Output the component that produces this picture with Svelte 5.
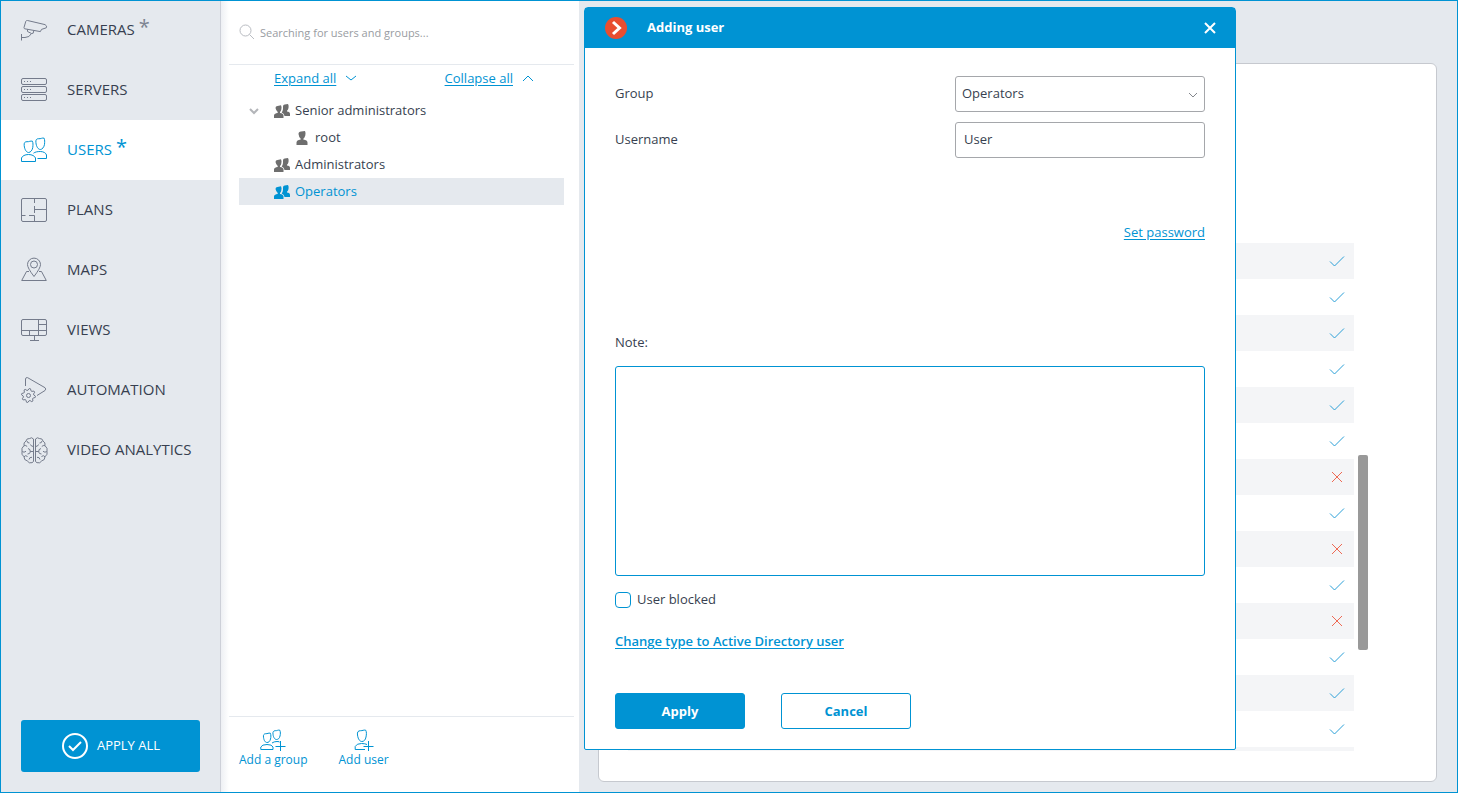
<script lang="ts">
  const menu = [
    { id: "cameras", title: "CAMERAS", changed: true },
    { id: "servers", title: "SERVERS" },
    { id: "users", title: "USERS", changed: true },
    { id: "plans", title: "PLANS" },
    { id: "maps", title: "MAPS" },
    { id: "views", title: "VIEWS" },
    { id: "automation", title: "AUTOMATION" },
    { id: "analytics", title: "VIDEO ANALYTICS" },
  ];

  const tree = [
    { name: "Senior administrators", level: 0, open: true },
    { name: "root", level: 1 },
    { name: "Administrators", level: 0 },
    { name: "Operators", level: 0 },
  ];

  // permissions of the selected group
  const rights = [
    true, true, true, true, true, true, false, true,
    false, true, false, true, true, true, true,
  ];

  // outline of a cog with eight teeth
  function cog(cx: number, cy: number, inner: number, outer: number) {
    const points = [];
    for (let i = 0; i < 32; i++) {
      const r = i % 4 < 2 ? outer : inner;
      const a = ((i + 0.5) / 32) * Math.PI * 2;
      points.push(`${(cx + r * Math.cos(a)).toFixed(2)},${(cy + r * Math.sin(a)).toFixed(2)}`);
    }
    return points.join(" ");
  }

  let section = $state("users");
  let selected = $state("Operators");
  let search = $state("");
  let group = $state("Operators");
  let username = $state("User");
  let note = $state("");
  let blocked = $state(false);
  let open = $state(true);
</script>

{#snippet menuIcon(id)}
  <svg class="menu-icon" width="28" height="28" viewBox="0 0 28 28" aria-hidden="true">
    {#if id === "cameras"}
      <path d="M4 11.5 5.8 5.3Q6.3 4.3 7.5 4.5L25 8.6Q27.6 10 26.3 11.8L21.5 13.4 20.4 15.6 4.8 12.8Q3.8 12.5 4 11.5Z" />
      <path d="M1.5 18V24.5M1.5 21.5H5Q9.5 21.5 11.5 17.5L13.2 17.2 13.8 14.5M7.5 13.4V15.5L11.5 17.5" />
    {:else if id === "servers"}
      <rect x="1.5" y="2.5" width="25" height="6" rx="1.5" />
      <rect x="1.5" y="10.5" width="25" height="6" rx="1.5" />
      <rect x="1.5" y="18.5" width="25" height="6" rx="1.5" />
      <path stroke-dasharray="1 2" d="M4 5.5h8M4 13.5h8M4 21.5h8" />
    {:else if id === "users"}
      <path d="M4.2 9.5C3.8 6.8 5 5.6 7 5.7 9 6 10.5 4.6 12.4 5.2 13.2 7 13 9 12.8 11.3 12.5 14 10.5 16.5 8.6 16.5S4.6 14 4.2 9.5Z" />
      <path d="M15.9 6.5C15.5 3.8 16.7 2.600 18.700 2.700 20.700 3 22.200 1.600 24.100 2.200 24.900 4 24.700 6 24.500 8.300 24.200 11 22.200 13.500 20.300 13.500S16.300 11 15.900 6.500Z" />
      <path d="M1.5 25.5V22C2.200 20 5 18.500 8.500 18.500S14.800 20 15.500 22V25.500Z" />
      <path d="M13.5 17.200C15 16 17.500 15.500 20.300 15.500 23.500 15.500 26 17 26.500 19V22.500H17.500" />
    {:else if id === "plans"}
      <rect x="1.5" y="2.5" width="25" height="23" rx="1.5" />
      <path d="M14.5 3v4M14.5 10v7M14.5 13.5h12M1.5 19.5h4M9 19.5h5.5v6" />
    {:else if id === "maps"}
      <path d="M14 20.5Q7.5 12 7.5 8.6A6.5 6.5 0 0 1 20.5 8.6Q20.5 12 14 20.5Z" />
      <circle cx="14" cy="8.5" r="3.5" />
      <path d="M9 15.5H6.5L1.7 24.5H26.3L21.5 15.5H19" />
    {:else if id === "views"}
      <rect x="1.5" y="3.5" width="25" height="16" rx="1.5" />
      <path d="M18.5 3.5v16M18.5 8.5h8M1.5 14.5h25M9.5 14.5v5M14.5 19.5v5M10 24.5h9" />
    {:else if id === "automation"}
      <path d="M5.500 10V3Q5.700 1.200 7.500 1.600L25 11.700Q26.500 13 25 14.500L17 19.500" />
      <circle cx="8.500" cy="19.500" r="2" />
      <polygon points={cog(8.5, 19.5, 5.3, 7)} stroke-linejoin="round" />
    {:else}
      <path d="M13.5 3Q11.5.8 9.7 2.5 6.5 2.2 6 5 3.3 6.5 4 9.7 1 12 2 15.3 1 18.5 4 20.8 4 24.3 7.2 24.8 9 27.8 12 26.7L13.5 25.5Z" />
      <path d="M15.5 3Q17.5.8 19.3 2.5 22.5 2.2 23 5 25.7 6.5 25 9.7 28 12 27 15.3 28 18.5 25 20.8 25 24.3 21.8 24.8 20 27.8 17 26.7L15.5 25.5Z" />
      <path d="M7 5Q7.3 7.3 9.5 7M4 9.7Q6 9 7.2 10.5M8 12.5Q10.7 13 10.3 16 10 18 7.5 18M13.5 15.5H10.3M2.2 15.5Q4 17 6 15.3M4 20.8Q5.5 18.7 7.5 20.5M10.5 8.5Q11 10.5 13.5 10.5M9 23.5Q9.5 20.8 12 21.3" />
      <path d="M22 5Q21.7 7.3 19.5 7M25 9.7Q23 9 21.8 10.5M21 12.5Q18.3 13 18.7 16 19 18 21.5 18M15.5 15.5H18.7M26.8 15.5Q25 17 23 15.3M25 20.8Q23.5 18.7 21.5 20.5M18.5 8.5Q18 10.5 15.5 10.5M20 23.5Q19.5 20.8 17 21.3" />
    {/if}
  </svg>
{/snippet}

<div class="window">
  <nav class="sidebar">
    {#each menu as item}
      <button class="menu-item" class:active={section === item.id} onclick={() => (section = item.id)}>
        {@render menuIcon(item.id)}
        <span class="menu-title">{item.title}</span>
        {#if item.changed}<span class="changed">*</span>{/if}
      </button>
    {/each}
    <button class="apply-all">
      <svg width="28" height="28" viewBox="0 0 28 28" aria-hidden="true">
        <circle cx="14" cy="14" r="12" />
        <path d="M8 14l4 4 8-8" />
      </svg>
      <span>APPLY ALL</span>
    </button>
  </nav>

  <section class="panel">
    <label class="search">
      <svg width="16" height="16" viewBox="0 0 16 16" aria-hidden="true">
        <circle cx="6.5" cy="6.5" r="5.5" />
        <path d="M10.5 10.5l4.5 4.5" />
      </svg>
      <input type="text" placeholder="Searching for users and groups..." bind:value={search} />
    </label>

    <div class="tree-actions">
      <a href="#expand">Expand all</a>
      <svg width="12" height="8" viewBox="0 0 12 8" aria-hidden="true"><path d="M1 2l5 4 5-4" /></svg>
      <a class="collapse" href="#collapse">Collapse all</a>
      <svg width="12" height="8" viewBox="0 0 12 8" aria-hidden="true"><path d="M1 7l5-5 5 5" /></svg>
    </div>

    <div class="tree">
      {#each tree as node}
        <button
          class="node"
          class:child={node.level === 1}
          class:selected={selected === node.name}
          onclick={() => (selected = node.name)}
        >
          <span class="toggle">
            {#if node.open}
              <svg width="10" height="8" viewBox="0 0 10 8" aria-hidden="true"><path d="M1 2l4 4 4-4" /></svg>
            {/if}
          </span>
          {#if node.level === 1}
            <svg class="who" width="12" height="16" viewBox="0 0 12 16" aria-hidden="true">
              <path d="M2.5 4Q2.5 1.5 5 1.5L9 1Q10 3 9.3 5.5 8.5 8 7.3 8.7V9.5Q11.5 10 11.5 12.5V15H.5V12.5Q.5 10 4.7 9.5V8.7Q2.8 7 2.5 4Z" />
            </svg>
          {:else}
            <svg class="who" width="16" height="16" viewBox="0 0 16 16" aria-hidden="true">
              <path d="M1.5 5Q1.5 3 3.5 3L7 2.3Q8 4 7.3 6.5 7 8 6 9V10Q9.5 10.5 9.5 12.5V15H0V12.5Q0 10.5 3.7 10V9Q2 7.5 1.5 5Z" />
              <path d="M9 3.5Q9 1.7 10.7 1.6L14 1Q15 2.5 14.5 5 14 7 13 7.8V8.6Q16 9 16 11V13H10.5Q10.5 10.5 7.7 9.5 8.8 8 9 6Z" />
            </svg>
          {/if}
          <span class="node-name">{node.name}</span>
        </button>
      {/each}
    </div>

    <div class="panel-footer">
      <button class="add">
        <svg width="26" height="22" viewBox="0 0 26 22" aria-hidden="true">
          <path d="M3.500 8.200C3.100 6 4 4.700 5.700 4.700 7.500 4.900 8.500 3.700 10.300 4.200 11.100 6 11 8 10.500 10 10 12.500 8.500 13.500 7 13.500S4 12 3.500 8.200Z" />
          <path d="M13 5.200C12.600 3 13.500 1.700 15.200 1.700 17 1.900 18 .7 19.800 1.200 20.600 3 20.500 5 20 7 19.500 9.500 18 10.500 16.500 10.500S13.500 9 13 5.200Z" />
          <path d="M13 20.500H.8V18Q2 15.500 7 15.500T13 18ZM12 14Q14 12.500 17 12.500T20 13.500M20.500 12v10M15.500 17.500H25.500" />
        </svg>
        Add a group
      </button>
      <button class="add">
        <svg width="20" height="22" viewBox="0 0 20 22" aria-hidden="true">
          <path d="M3.500 6C3 3 4.200 1.700 6.500 1.700 8.500 1.800 9.700.7 11.700 1.200 12.700 3 12.500 5.500 12 8 11.500 11 9.800 12.500 8 12.500S4.200 11 3.500 6Z" />
          <path d="M11 20.500H1.200V17.500Q2.500 14.500 7.500 14.500 11 14.500 13 15.500M14.500 12v10M9.500 17.500H19.500" />
        </svg>
        Add user
      </button>
    </div>
  </section>

  <main class="content">
    <div class="card">
      <div class="rights">
        <table>
          <tbody>
            {#each rights as allowed}
              <tr>
                <td></td>
                <td class="mark">
                  {#if allowed}
                    <svg class="yes" width="16" height="12" viewBox="0 0 16 12" role="img" aria-label="Allowed">
                      <path d="M1 6.5l4.5 4.5L15 1.5" />
                    </svg>
                  {:else}
                    <svg class="no" width="12" height="12" viewBox="0 0 12 12" role="img" aria-label="Denied">
                      <path d="M1 1l10 10M11 1L1 11" />
                    </svg>
                  {/if}
                </td>
              </tr>
            {/each}
          </tbody>
        </table>
      </div>
      <div class="scrollbar"><div class="thumb"></div></div>
    </div>
  </main>

  {#if open}
    <form class="dialog" aria-label="Adding user" onsubmit={(e) => e.preventDefault()}>
      <header>
        <svg class="logo" width="22" height="22" viewBox="0 0 22 22" aria-hidden="true">
          <circle cx="11" cy="11" r="11" />
          <path d="M8 5l6.5 6L8 17" />
        </svg>
        <h1>Adding user</h1>
        <button class="close" type="button" aria-label="Close" onclick={() => (open = false)}>
          <svg width="12" height="12" viewBox="0 0 12 12" aria-hidden="true"><path d="M1 1l10 10M11 1L1 11" /></svg>
        </button>
      </header>

      <div class="dialog-body">
        <div class="field">
          <label for="group">Group</label>
          <div class="select">
            <select id="group" bind:value={group}>
              <option>Senior administrators</option>
              <option>Administrators</option>
              <option>Operators</option>
            </select>
            <svg width="10" height="8" viewBox="0 0 10 8" aria-hidden="true"><path d="M1 2l4 4 4-4" /></svg>
          </div>
        </div>
        <div class="field">
          <label for="username">Username</label>
          <input id="username" type="text" bind:value={username} />
        </div>

        <a class="password" href="#password">Set password</a>

        <label class="note-label" for="note">Note:</label>
        <textarea id="note" bind:value={note}></textarea>

        <label class="blocked">
          <input type="checkbox" bind:checked={blocked} />
          <span>User blocked</span>
        </label>

        <a class="change-type" href="#type">Change type to Active Directory user</a>

        <div class="buttons">
          <button class="primary" type="submit">Apply</button>
          <button type="button" onclick={() => (open = false)}>Cancel</button>
        </div>
      </div>
    </form>
  {/if}
</div>

<style>
  :global(body) {
    background: #e5e9ee;
  }
  .window {
    --blue: #0093d3;
    --text: #373f50;
    --grey: #e5e9ee;
    position: relative;
    box-sizing: border-box;
    display: grid;
    grid-template-columns: 220px 359px 1fr;
    grid-template-rows: minmax(0, 1fr);
    height: 100vh;
    min-height: 760px;
    background: var(--grey);
    color: var(--text);
    font: 13px/20px "Open Sans", "Noto Sans", sans-serif;
  }
  .window::after {
    content: "";
    position: absolute;
    inset: 0;
    border: 1px solid var(--blue);
    pointer-events: none;
  }
  .window * {
    box-sizing: border-box;
  }
  button, input, select, textarea {
    font: inherit;
    color: inherit;
  }
  button {
    padding: 0;
    border: 0;
    background: none;
    cursor: pointer;
  }
  a {
    color: var(--blue);
    text-underline-offset: 2px;
  }
  svg {
    flex: none;
    fill: none;
    stroke: currentColor;
  }
  .menu-title, .apply-all span, .node-name, h1, .field label, .blocked span {
    padding-bottom: 2px;
  }

  /* main menu */
  .sidebar {
    display: flex;
    flex-direction: column;
    padding-bottom: 21px;
  }
  .menu-item {
    display: flex;
    align-items: center;
    height: 60px;
    padding-left: 20px;
    font-size: 15px;
  }
  .menu-item.active {
    background: #fff;
    color: var(--blue);
  }
  .menu-icon {
    margin-right: 19px;
    color: #747b8b;
  }
  .active .menu-icon {
    color: var(--blue);
  }
  .changed {
    margin-left: 4px;
    padding-bottom: 6px;
    color: #7d8391;
    font-size: 20px;
  }
  .active .changed {
    color: var(--blue);
  }
  .apply-all {
    display: flex;
    align-items: center;
    justify-content: center;
    gap: 8px;
    height: 52px;
    margin: auto 20px 0 21px;
    border-radius: 3px;
    background: var(--blue);
    color: #fff;
  }
  .apply-all svg {
    stroke-width: 2;
  }

  /* users tree */
  .panel {
    display: flex;
    flex-direction: column;
    padding: 0 5px 0 8px;
    border-left: 1px solid #cdd0d8;
    background: linear-gradient(90deg, #eef0f4, #fff 8px);
  }
  .search {
    display: flex;
    align-items: center;
    gap: 5px;
    height: 65px;
    padding-left: 10px;
    border-bottom: 1px solid var(--grey);
  }
  .search svg {
    color: #b9bcc2;
  }
  .search input {
    flex: 1;
    min-width: 0;
    padding: 2px 0 0;
    border: 0;
    outline: 0;
    background: none;
    font-size: 11px;
  }
  .search input::placeholder {
    color: #999ca2;
    opacity: 1;
  }
  .tree-actions {
    display: flex;
    align-items: center;
    gap: 9px;
    padding: 3px 40px 3px 45px;
    color: var(--blue);
  }
  .collapse {
    margin-left: auto;
  }
  .tree {
    display: flex;
    flex: 1;
    flex-direction: column;
    padding: 6px 10px 0;
  }
  .node {
    display: flex;
    align-items: center;
    height: 27px;
    gap: 5px;
  }
  .toggle {
    display: flex;
    justify-content: center;
    width: 30px;
    color: #b3b5b9;
    stroke-width: 2;
  }
  .child .toggle {
    width: 52px;
  }
  .who {
    color: #6e6e6e;
    fill: currentColor;
    stroke: none;
  }
  .child .who {
    margin-right: 2px;
  }
  .selected {
    background: var(--grey);
    color: var(--blue);
  }
  .selected .who {
    color: var(--blue);
  }
  .panel-footer {
    display: flex;
    align-items: flex-start;
    gap: 31px;
    height: 77px;
    padding: 12px 10px 0;
    border-top: 1px solid var(--grey);
  }
  .add {
    display: flex;
    flex-direction: column;
    align-items: center;
    color: var(--blue);
    font-size: 12px;
    line-height: 18px;
  }

  /* group rights */
  .content {
    padding: 63px 21px 11px 19px;
  }
  .card {
    display: flex;
    gap: 4px;
    height: 100%;
    padding: 179px 68px 30px 29px;
    border: 1px solid #c6c9cf;
    border-radius: 6px;
    background: #fff;
  }
  .rights {
    flex: 1;
    overflow: hidden;
  }
  table {
    width: 100%;
    border-collapse: collapse;
  }
  tr {
    height: 36px;
  }
  tr:nth-child(odd) {
    background: #f4f5f7;
  }
  td {
    padding: 0;
  }
  .mark {
    width: 34px;
    line-height: 0;
    text-align: center;
  }
  .yes {
    color: #2ba0d8;
  }
  .no {
    color: #ee6a54;
  }
  .scrollbar {
    width: 10px;
    padding-top: 212px;
  }
  .thumb {
    height: 195px;
    border-radius: 2px;
    background: #999;
  }

  /* dialog */
  .dialog {
    position: absolute;
    top: 7px;
    left: 584px;
    width: 652px;
    border: 1px solid var(--blue);
    border-radius: 4px 4px 2px 2px;
    background: #fff;
  }
  header {
    display: flex;
    align-items: center;
    height: 40px;
    padding: 0 19px 0 20px;
    background: var(--blue);
    color: #fff;
  }
  h1 {
    margin: 0 auto 0 20px;
    font-size: 13px;
    font-weight: 700;
  }
  .logo circle {
    fill: #e84e30;
    stroke: none;
  }
  .logo path {
    stroke: #fff;
    stroke-width: 3;
  }
  .close {
    display: flex;
  }
  .close svg {
    stroke-width: 2;
  }
  .dialog-body {
    display: flex;
    flex-direction: column;
    padding: 28px 30px 20px;
  }
  .field {
    display: flex;
    align-items: center;
    justify-content: space-between;
    margin-bottom: 10px;
  }
  .select {
    position: relative;
  }
  .select svg {
    position: absolute;
    top: 15px;
    right: 7px;
    color: #84878d;
    pointer-events: none;
  }
  select, .field input {
    display: block;
    width: 250px;
    height: 36px;
    padding: 0 8px 2px;
    border: 1px solid #a5a7ab;
    border-radius: 3px;
    background: #fff;
  }
  select {
    appearance: none;
    padding: 0 6px 2px;
  }
  .password {
    align-self: flex-end;
    margin-top: 54px;
  }
  .note-label {
    margin-top: 90px;
  }
  textarea {
    height: 210px;
    margin-top: 14px;
    padding: 8px;
    border: 1px solid var(--blue);
    border-radius: 3px;
    outline: 0;
    resize: none;
  }
  .blocked {
    display: flex;
    align-items: center;
    align-self: flex-start;
    gap: 6px;
    height: 20px;
    margin-top: 14px;
  }
  .blocked input {
    appearance: none;
    width: 16px;
    height: 16px;
    margin: 0;
    border: 1px solid var(--blue);
    border-radius: 4px;
  }
  .blocked input:checked {
    background: var(--blue);
  }
  .change-type {
    align-self: flex-start;
    margin-top: 21px;
    font-weight: 600;
  }
  .buttons {
    display: flex;
    gap: 36px;
    margin-top: 42px;
  }
  .buttons button {
    width: 130px;
    height: 36px;
    border: 1px solid var(--blue);
    border-radius: 3px;
    color: var(--blue);
    font-weight: 700;
  }
  .buttons .primary {
    background: var(--blue);
    color: #fff;
  }
</style>
